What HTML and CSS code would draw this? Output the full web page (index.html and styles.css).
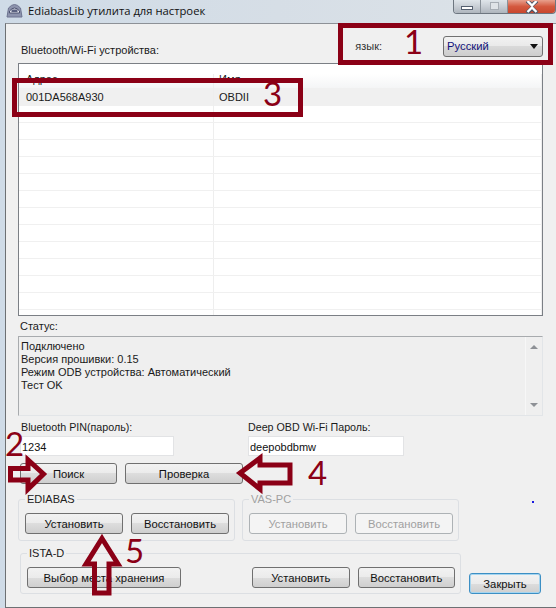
FILE: index.html
```html
<!DOCTYPE html>
<html lang="ru">
<head>
  <meta charset="UTF-8">
  <meta name="viewport" content="width=device-width, initial-scale=1">
  <title>EdiabasLib утилита для настроек</title>
  <link rel="stylesheet" href="styles.css">
</head>
<body>

<div class="window">
  <div class="titlebar">
    <svg class="app-icon" width="17" height="15" viewBox="0 0 17 15">
      <path d="M1 14 L2.5 5 Q8.5 -2 14.5 5 L16 14 Z" fill="#8d93ad" stroke="#6d7390"/>
      <path d="M3.5 8 Q8.5 2 13.5 8 L13.5 10 L3.5 10 Z" fill="#e4e6ee" stroke="#4c5270"/>
      <rect x="5.5" y="6.5" width="6" height="2.5" fill="#5b6180"/>
    </svg>
    <span class="title">EdiabasLib утилита для настроек</span>
    <div class="win-controls">
      <div class="win-btn btn-min"><span></span></div>
      <div class="win-btn btn-max"><span></span></div>
      <div class="win-btn btn-close">
        <svg width="16" height="12" viewBox="0 0 16 12">
          <path d="M3 0 L8 4 L13 0 M3 12 L8 7 L13 12" fill="none" stroke="#4a5568" stroke-width="4"/>
          <path d="M3.5 0 L8 4.5 L12.5 0 M3.5 11 L8 6.5 L12.5 11" fill="none" stroke="#fff" stroke-width="2.4"/>
        </svg>
      </div>
    </div>
  </div>

  <div class="client">
    <div class="top-row">
      <label class="devices-label">Bluetooth/Wi-Fi устройства:</label>
      <div class="lang">
        <label>язык:</label>
        <div class="combo">Русский<span class="combo-arrow"></span></div>
      </div>
    </div>

    <div class="list">
      <div class="list-row list-head"><div>Адрес</div><div>Имя</div></div>
      <div class="list-row selected"><div>001DA568A930</div><div>OBDII</div></div>
      <div class="list-row"><div></div><div></div></div>
      <div class="list-row"><div></div><div></div></div>
      <div class="list-row"><div></div><div></div></div>
      <div class="list-row"><div></div><div></div></div>
      <div class="list-row"><div></div><div></div></div>
      <div class="list-row"><div></div><div></div></div>
      <div class="list-row"><div></div><div></div></div>
      <div class="list-row"><div></div><div></div></div>
      <div class="list-row"><div></div><div></div></div>
      <div class="list-row"><div></div><div></div></div>
      <div class="list-row"><div></div><div></div></div>
      <div class="list-row"><div></div><div></div></div>
      <div class="list-row"><div></div><div></div></div>
    </div>

    <label class="status-label">Статус:</label>
    <div class="status">
      <div class="status-text">
        Подключено<br>
        Версия прошивки: 0.15<br>
        Режим ODB устройства: Автоматический<br>
        Тест OK
      </div>
      <div class="scrollbar">
        <span class="arrow-up"></span>
        <span class="arrow-down"></span>
      </div>
    </div>

    <div class="pin-row">
      <div class="field field-pin">
        <label>Bluetooth PIN(пароль):</label>
        <input type="text" value="1234">
      </div>
      <div class="field field-wifi">
        <label>Deep OBD Wi-Fi Пароль:</label>
        <input type="text" value="deepobdbmw">
      </div>
    </div>

    <div class="action-row">
      <button class="btn btn-search">Поиск</button>
      <button class="btn btn-check">Проверка</button>
    </div>

    <div class="groups">
      <fieldset class="group">
        <legend>EDIABAS</legend>
        <button class="btn btn-std">Установить</button>
        <button class="btn btn-std">Восстановить</button>
      </fieldset>
      <fieldset class="group disabled">
        <legend>VAS-PC</legend>
        <button class="btn btn-std" disabled>Установить</button>
        <button class="btn btn-std" disabled>Восстановить</button>
      </fieldset>
    </div>

    <div class="bottom-row">
      <fieldset class="group group-ista">
        <legend>ISTA-D</legend>
        <button class="btn btn-store">Выбор места хранения</button>
        <button class="btn btn-std">Установить</button>
        <button class="btn btn-std">Восстановить</button>
      </fieldset>
      <button class="btn btn-close-app">Закрыть</button>
    </div>
  </div>

  <!-- red marks drawn over the screenshot -->
  <div class="mark-box box-lang"></div>
  <div class="mark-box box-device"></div>
  <svg class="arrows" width="556" height="608" viewBox="0 0 556 608">
    <path d="M10.5 468.5 H28 V460 L43.5 474 L28 489 V480 H10.5 Z"/>
    <path d="M240 473 L260 458 V465 H290 V483 H260 V489 Z"/>
    <path d="M102 538.500 L118 564 H109 V593 H94.500 V564 H86 Z"/>
  </svg>
  <span class="num num-1">1</span>
  <span class="num num-2">2</span>
  <span class="num num-3">3</span>
  <span class="num num-4">4</span>
  <span class="num num-5">5</span>
  <span class="dot"></span>
</div>

</body>
</html>
```

FILE: styles.css
```css
* {
  box-sizing: border-box;
}
body {
  margin: 0;
  font-family: "Liberation Sans", Arial, sans-serif;
  font-size: 11px;
  color: #1a1a1a;
  background: #dbe4ec;
  overflow: hidden;
}
.window {
  position: relative;
  width: 556px;
  height: 608px;
  overflow: hidden;
  background: linear-gradient(90deg, #cfdbe7, #d6dee6 50%, #dde3e8);
}

/* title bar */
.titlebar {
  display: flex;
  align-items: flex-start;
  height: 23px;
  padding-left: 6px;
}
.app-icon {
  margin-top: 3px;
}
.title {
  margin: 2px 0 0 5px;
  font-family: "Open Sans", sans-serif;
  font-size: 11.25px;
  line-height: 17px;
  color: #111;
}
.win-controls {
  display: flex;
  margin-left: auto;
  width: 103px;
  height: 14px;
  border: 1px solid #6d7680;
  border-top: none;
  border-radius: 0 0 4px 4px;
  overflow: hidden;
}
.win-btn {
  display: flex;
  align-items: center;
  justify-content: center;
  height: 100%;
  border-right: 1px solid #8a929a;
  background: linear-gradient(#dfe5ea, #c8ced5 50%, #aeb5bd);
}
.btn-min {
  width: 27px;
}
.btn-min span {
  display: block;
  width: 12px;
  height: 4px;
  margin-top: 3px;
  background: #fff;
  border: 1px solid #556070;
}
.btn-max {
  width: 27px;
}
.btn-max span {
  display: block;
  width: 9px;
  height: 8px;
  margin-top: -2px;
  background: #dfe3e7;
  border: 1px solid #a7adb4;
}
.btn-close {
  flex: 1;
  border-right: none;
  background: linear-gradient(#e8a08d, #d4593f 50%, #c9472e);
}

/* client area */
.client {
  height: 585px;
  margin-left: 5px;
  padding-left: 12px;
  background: #f0f0f0;
  border-left: 1px solid #6d7073;
  border-top: 1px solid #8d9197;
  border-bottom: 1px solid #6d7073;
}
label {
  display: block;
  line-height: 13px;
}
.top-row {
  display: flex;
  height: 39px;
  width: 525px;
}
.devices-label {
  margin: 20px 0 0 3px;
}
.lang {
  display: flex;
  margin-left: auto;
  padding-top: 12px;
}
.lang label {
  margin: 4px 61px 0 0;
  color: #333;
}
.combo {
  position: relative;
  width: 100px;
  height: 21px;
  padding: 3px 0 0 3px;
  font-size: 11.25px;
  color: #10107a;
  background: linear-gradient(#f2f2f2, #e9e9e9 50%, #d9d9d9 50%, #cdcdcd);
  border: 1px solid #707070;
  border-radius: 3px;
}
.combo-arrow {
  position: absolute;
  right: 4px;
  top: 7px;
  border-left: 4px solid transparent;
  border-right: 4px solid transparent;
  border-top: 5px solid #111;
}

/* device list */
.list {
  width: 525px;
  height: 253px;
  padding-top: 10px;
  background: #fff;
  border: 1px solid #7b7f85;
  overflow: hidden;
}
.list-row {
  display: grid;
  grid-template-columns: 195px 1fr;
  height: 17px;
  line-height: 17px;
  border-bottom: 1px solid #f0f0f0;
}
.list-row div {
  padding-left: 5px;
  border-right: 1px solid #eeeeee;
}
.list-row div:first-child {
  padding-left: 7px;
}
.list-head {
  height: 14px;
  line-height: 11px;
  background: linear-gradient(#fff, #f4f5f6);
  border-bottom: none;
}
.selected {
  height: 18px;
  line-height: 18px;
  background: #f0f0f0;
  border-bottom: none;
}

/* status */
.status-label {
  margin: 4px 0 3px 2px;
}
.status {
  display: flex;
  width: 525px;
  height: 80px;
  background: #efefef;
  border: 1px solid;
  border-color: #a8abae #e2e5e8 #e2e5e8 #a8abae;
}
.status-text {
  flex: 1;
  padding: 3px 0 0 2px;
  line-height: 13px;
}
.scrollbar {
  display: flex;
  flex-direction: column;
  justify-content: space-between;
  align-items: center;
  width: 17px;
  padding: 8px 0;
  border-left: 1px solid #f7f7f7;
}
.arrow-up,
.arrow-down {
  display: block;
  border-left: 4px solid transparent;
  border-right: 4px solid transparent;
}
.arrow-up {
  border-bottom: 4px solid #8e9196;
}
.arrow-down {
  border-top: 4px solid #8e9196;
}

/* pin fields */
.pin-row {
  display: flex;
  margin-top: 5px;
}
.field label {
  margin-left: 3px;
  margin-bottom: 2px;
  font-size: 10.7px;
}
.field-pin {
  width: 230px;
}
.field-wifi label {
  margin-left: 0;
}
.field input {
  display: block;
  height: 20px;
  padding: 1px 0 0 1px;
  font-family: "Liberation Sans", Arial, sans-serif;
  font-size: 11px;
  color: #111;
  background: #fff;
  border: 1px solid #e2e3e5;
  outline: none;
}
.field-pin input {
  width: 154px;
  margin-left: 2px;
}
.field-wifi input {
  width: 156px;
}

/* buttons */
.btn {
  height: 21px;
  padding: 0;
  font-family: "Liberation Sans", Arial, sans-serif;
  font-size: 11.25px;
  color: #111;
  background: linear-gradient(#f2f2f2, #ebebeb 50%, #dddddd 50%, #cfcfcf);
  border: 1px solid #707070;
  border-radius: 3px;
}
.btn:disabled {
  color: #a0a0a0;
  background: #f4f4f4;
  border-color: #adb2b5;
}
.action-row {
  display: flex;
  gap: 8px;
  margin: 7px 0 0 2px;
}
.btn-search {
  width: 97px;
}
.btn-check {
  width: 118px;
}

/* group boxes */
.group {
  display: flex;
  align-items: flex-start;
  gap: 8px;
  margin: 0;
  padding: 7px 0 0 6px;
  height: 48px;
  border: 1px solid #dcdfe3;
  border-radius: 3px;
}
.group legend {
  padding: 0 2px;
  line-height: 13px;
  color: #222;
}
.group.disabled legend {
  color: #a0a0a0;
}
.groups {
  display: flex;
  gap: 7px;
  margin-top: 9px;
}
.groups .group {
  width: 217px;
}
.btn-std {
  width: 98px;
}
.bottom-row {
  display: flex;
  align-items: flex-end;
  margin: 6px 0 0 2px;
}
.group-ista {
  width: 441px;
  height: 47px;
}
.group-ista .btn-std {
  width: 97.5px;
}
.btn-store {
  width: 154px;
  margin-right: 63px;
}
.btn-close-app {
  width: 72px;
  height: 21px;
  margin-left: 8px;
  border-color: #3c8fc4;
  box-shadow: 0 0 0 1px #a5d5f0 inset;
}

/* marks */
.mark-box {
  position: absolute;
  border: 5px solid #8b0016;
}
.box-lang {
  left: 338px;
  top: 23px;
  width: 215px;
  height: 42px;
}
.box-device {
  left: 12px;
  top: 78px;
  width: 291px;
  height: 39px;
}
.arrows {
  position: absolute;
  left: 0;
  top: 0;
  fill: none;
  stroke: #8b0016;
  stroke-width: 5;
}
.num {
  position: absolute;
  font-family: Lato, sans-serif;
  font-size: 33px;
  line-height: 25px;
  color: #8b0016;
}
.num-1 { left: 404px; top: 29px; }
.num-2 { left: 5px; top: 431px; }
.num-3 { left: 263px; top: 81px; }
.num-4 { left: 308px; top: 460px; }
.num-5 { left: 125px; top: 538px; }
.dot {
  position: absolute;
  left: 532px;
  top: 501px;
  width: 2px;
  height: 2px;
  background: #1a1ae0;
}
```
